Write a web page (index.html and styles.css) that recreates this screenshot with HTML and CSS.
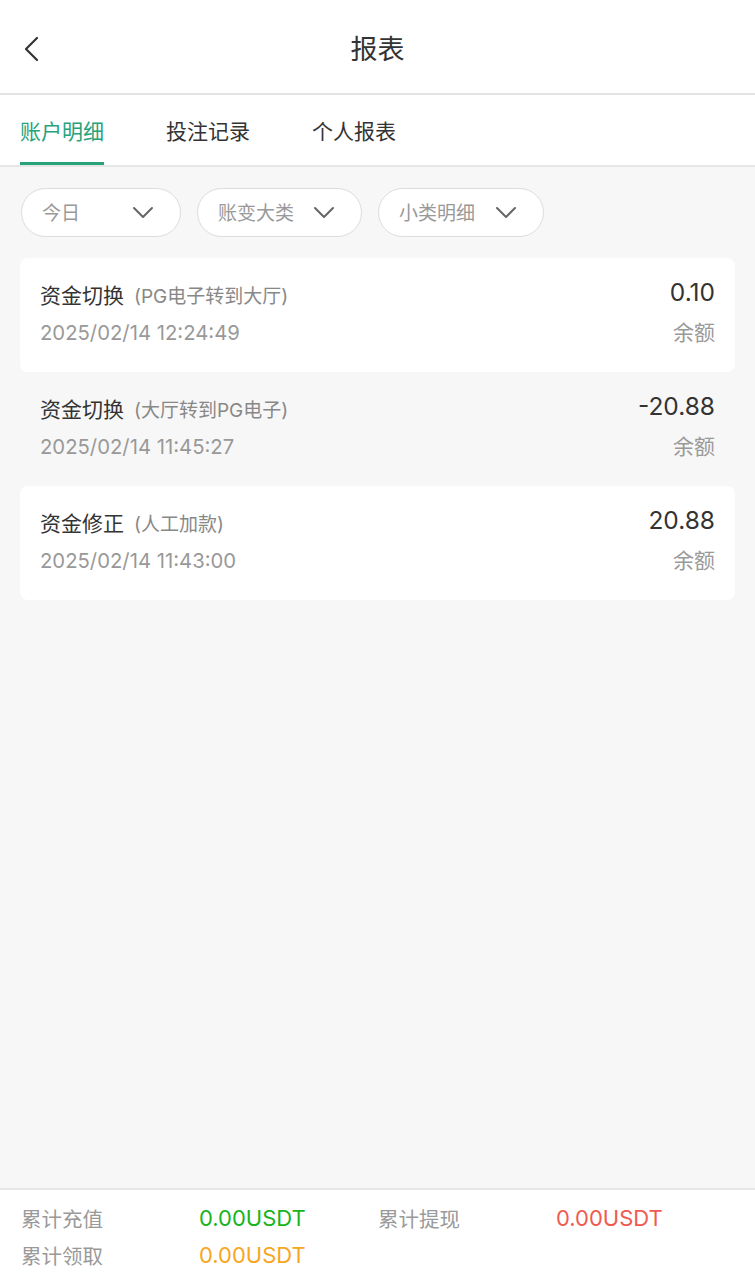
FILE: index.html
```html
<!DOCTYPE html>
<html lang="zh-CN">
<head>
<meta charset="utf-8">
<title>报表</title>
<link rel="stylesheet" href="styles.css">
</head>
<body>
<div class="page">
  <header class="topbar">
    <span class="back">
      <svg width="20" height="26" viewBox="0 0 20 26"><path d="M15 2 L4 13 L15 24" fill="none" stroke="#333" stroke-width="2.2" stroke-linecap="round" stroke-linejoin="round"/></svg>
    </span>
    <h1 class="title">报表</h1>
  </header>
  <nav class="tabs">
    <span class="tab active">账户明细</span>
    <span class="tab">投注记录</span>
    <span class="tab">个人报表</span>
  </nav>
  <main class="content">
    <div class="filters">
      <div class="pill p1"><span>今日</span><svg class="chev" width="22" height="13" viewBox="0 0 22 13"><path d="M2 2 L11 11 L20 2" fill="none" stroke="#666" stroke-width="2" stroke-linecap="round" stroke-linejoin="round"/></svg></div>
      <div class="pill p2"><span>账变大类</span><svg class="chev" width="22" height="13" viewBox="0 0 22 13"><path d="M2 2 L11 11 L20 2" fill="none" stroke="#666" stroke-width="2" stroke-linecap="round" stroke-linejoin="round"/></svg></div>
      <div class="pill p3"><span>小类明细</span><svg class="chev" width="22" height="13" viewBox="0 0 22 13"><path d="M2 2 L11 11 L20 2" fill="none" stroke="#666" stroke-width="2" stroke-linecap="round" stroke-linejoin="round"/></svg></div>
    </div>
    <div class="list">
      <div class="item white">
        <div class="left">
          <div class="name">资金切换<span class="sub">(PG电子转到大厅)</span></div>
          <div class="date">2025/02/14 12:24:49</div>
        </div>
        <div class="right">
          <div class="amount">0.10</div>
          <div class="bal">余额</div>
        </div>
      </div>
      <div class="item">
        <div class="left">
          <div class="name">资金切换<span class="sub">(大厅转到PG电子)</span></div>
          <div class="date">2025/02/14 11:45:27</div>
        </div>
        <div class="right">
          <div class="amount">-20.88</div>
          <div class="bal">余额</div>
        </div>
      </div>
      <div class="item white">
        <div class="left">
          <div class="name">资金修正<span class="sub">(人工加款)</span></div>
          <div class="date">2025/02/14 11:43:00</div>
        </div>
        <div class="right">
          <div class="amount">20.88</div>
          <div class="bal">余额</div>
        </div>
      </div>
    </div>
  </main>
  <footer class="summary">
    <div class="cell"><span class="lab">累计充值</span><span class="val green">0.00USDT</span></div>
    <div class="cell"><span class="lab">累计提现</span><span class="val red">0.00USDT</span></div>
    <div class="cell"><span class="lab">累计领取</span><span class="val orange">0.00USDT</span></div>
  </footer>
</div>
</body>
</html>
```
FILE: styles.css
```css
* { box-sizing: border-box; margin: 0; padding: 0; }
html, body { height: 100%; }
body {
  font-family: "Inter", "Noto Sans CJK SC", "Noto Sans", sans-serif;
  background: #f7f7f7;
  color: #333;
}
.page {
  height: 1280px;
  display: flex;
  flex-direction: column;
}
.topbar {
  height: 95px;
  background: #fff;
  border-bottom: 2px solid #e4e4e4;
  display: flex;
  align-items: center;
  justify-content: center;
  position: relative;
  flex: none;
}
.back {
  position: absolute;
  left: 22px;
  top: 36px;
  display: flex;
}
.title {
  font-size: 27px;
  font-weight: 400;
  color: #333;
  line-height: 1;
  margin-top: 6px;
}
.tabs {
  height: 72px;
  background: #fff;
  border-bottom: 2px solid #e6e6e6;
  display: flex;
  gap: 62px;
  padding-left: 20px;
  flex: none;
}
.tab {
  font-size: 21px;
  color: #333;
  display: flex;
  align-items: center;
  height: 100%;
  position: relative;
}
.tab.active {
  color: #27a37b;
}
.tab.active::after {
  content: "";
  position: absolute;
  left: 0;
  right: 0;
  bottom: 0;
  height: 3px;
  background: #27a37b;
}
.content {
  flex: 1;
  padding: 21px 20px 0;
}
.filters {
  display: flex;
  gap: 16px;
  padding-left: 1px;
}
.pill {
  height: 49px;
  border: 1.5px solid #dcdcdc;
  border-radius: 25px;
  background: #fff;
  display: flex;
  align-items: center;
  padding-left: 20px;
  padding-bottom: 2px;
  font-size: 19px;
  color: #999;
}
.pill.p1 { width: 160px; }
.pill.p2 { width: 165px; }
.pill.p3 { width: 166px; }
.pill .chev { margin-left: auto; margin-right: 26px; margin-top: 2px; }
.list {
  margin-top: 21px;
  display: flex;
  flex-direction: column;
}
.item {
  height: 114px;
  border-radius: 8px;
  display: flex;
  justify-content: space-between;
  padding: 22px 20px 0 20px;
}
.item.white { background: #fff; }
.name {
  font-size: 21px;
  color: #333;
  line-height: 32px;
}
.sub {
  font-size: 19px;
  color: #888;
  margin-left: 10px;
}
.date {
  font-size: 20.3px;
  color: #999;
  line-height: 30px;
  margin-top: 5px;
}
.right {
  text-align: right;
}
.amount {
  font-size: 24.5px;
  color: #333;
  line-height: 30px;
  margin-top: -3px;
}
.bal {
  font-size: 21px;
  color: #999;
  line-height: 30px;
  margin-top: 11px;
}
.summary {
  flex: none;
  height: 92px;
  background: #fff;
  border-top: 2px solid #e6e6e6;
  display: grid;
  grid-template-columns: 357px 1fr;
  grid-auto-rows: 37px;
  padding: 9px 0 0 21px;
}
.cell {
  display: flex;
  align-items: center;
  font-size: 20.5px;
}
.lab { color: #999; width: 178px; }
.val { font-size: 22px; }
.val.green { color: #18b41c; }
.val.red { color: #ef5a50; }
.val.orange { color: #f7a623; }
```
